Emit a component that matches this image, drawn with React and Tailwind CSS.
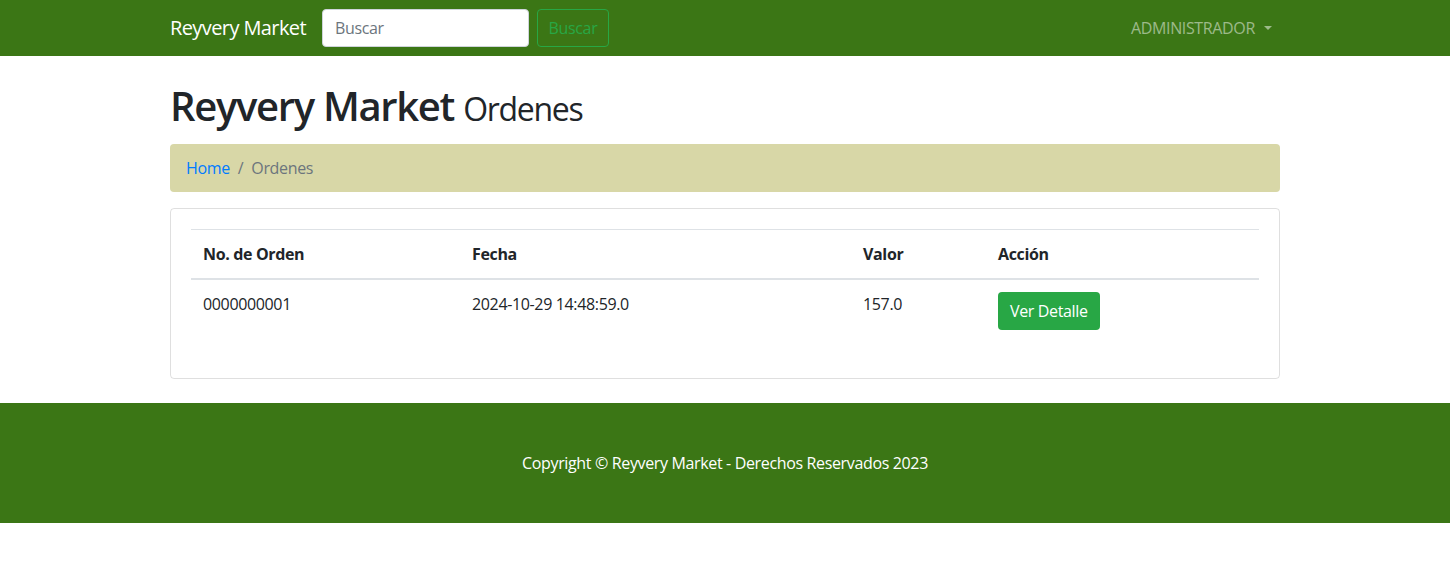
const orders = [
  { id: "0000000001", fecha: "2024-10-29 14:48:59.0", valor: "157.0" },
];

const App = () => {
  return (
    <div className="min-h-screen bg-white text-[#212529] font-['Segoe_UI','Open_Sans',sans-serif] text-base leading-6 tracking-[-0.022em]">
      {/* Navbar */}
      <nav className="bg-[#3b7615] h-14">
        <div className="max-w-[1140px] mx-auto px-[15px] h-full flex items-center">
          <span className="text-white text-xl leading-[30px] mr-4 tracking-[-0.03em]">Reyvery Market</span>
          <input
            type="text"
            placeholder="Buscar"
            className="w-[207px] h-[38px] px-3 rounded bg-white border border-[#ced4da] text-base tracking-[-0.022em] placeholder:text-[#6c757d] focus:outline-none"
          />
          <button className="ml-2 w-[72px] h-[38px] rounded border border-[#28a745] text-[#28a745] text-base">
            Buscar
          </button>
          <div className="ml-auto flex items-center text-white/50 pr-2">
            ADMINISTRADOR
            <span className="ml-[9px] inline-block w-0 h-0 border-l-[4px] border-r-[4px] border-t-[4px] border-l-transparent border-r-transparent border-t-white/50"></span>
          </div>
        </div>
      </nav>

      <div className="max-w-[1140px] mx-auto px-[15px]">
        <h1 className="mt-6 mb-4 h-12 pt-[2px] text-[40px] leading-[48px] tracking-[-0.033em]">
          <span className="font-semibold">Reyvery Market</span>{" "}
          <span className="text-[32px] leading-none font-normal">Ordenes</span>
        </h1>

        {/* Breadcrumb */}
        <div className="bg-[#d8d7a7] rounded px-4 py-3 mb-4 flex items-center">
          <a href="#" className="text-[#007bff]">Home</a>
          <span className="px-2 text-[#6c757d]">/</span>
          <span className="text-[#6c757d]">Ordenes</span>
        </div>

        {/* Card */}
        <div className="border border-black/[0.125] rounded p-5">
          <table className="w-full mb-4 border-collapse text-left">
            <thead>
              <tr className="border-t border-[#dee2e6] border-b-2">
                <th className="w-[269px] p-3 font-bold">No. de Orden</th>
                <th className="w-[391px] p-3 font-bold">Fecha</th>
                <th className="w-[135px] p-3 font-bold">Valor</th>
                <th className="p-3 font-bold">Acción</th>
              </tr>
            </thead>
            <tbody>
              {orders.map((o) => (
                <tr key={o.id}>
                  <td className="p-3 align-top">{o.id}</td>
                  <td className="p-3 align-top">{o.fecha}</td>
                  <td className="p-3 align-top">{o.valor}</td>
                  <td className="p-3 align-top">
                    <button className="bg-[#28a745] text-white rounded px-3 h-[38px]">
                      Ver Detalle
                    </button>
                  </td>
                </tr>
              ))}
            </tbody>
          </table>
        </div>
      </div>

      {/* Footer */}
      <footer className="mt-6 bg-[#3b7615] h-[120px] flex items-center justify-center">
        <p className="text-white">Copyright © Reyvery Market - Derechos Reservados 2023</p>
      </footer>
    </div>
  );
};

export default App;
